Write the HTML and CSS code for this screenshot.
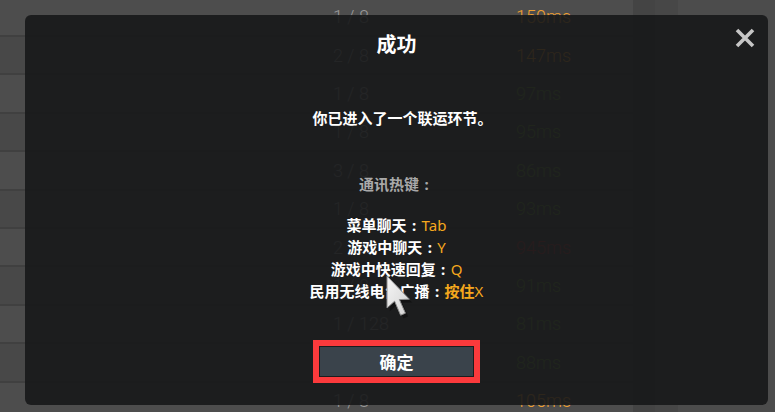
FILE: index.html
```html
<!DOCTYPE html>
<html lang="zh">
<head>
<meta charset="utf-8">
<title>成功</title>
<link rel="stylesheet" href="styles.css">
</head>
<body>
<div class="page">
  <div class="table">
    <div class="row"><span class="frac">1 / 8</span><span class="ms orange">150ms</span></div>
    <div class="row"><span class="frac">2 / 8</span><span class="ms orange">147ms</span></div>
    <div class="row"><span class="frac">1 / 8</span><span class="ms green">97ms</span></div>
    <div class="row"><span class="frac">1 / 8</span><span class="ms green">95ms</span></div>
    <div class="row"><span class="frac">3 / 8</span><span class="ms green">86ms</span></div>
    <div class="row"><span class="frac">1 / 8</span><span class="ms green">93ms</span></div>
    <div class="row"><span class="frac">2 / 8</span><span class="ms red">945ms</span></div>
    <div class="row"><span class="frac">1 / 8</span><span class="ms green">91ms</span></div>
    <div class="row"><span class="frac">1 / 128</span><span class="ms green">81ms</span></div>
    <div class="row"><span class="frac">1 / 8</span><span class="ms green">88ms</span></div>
    <div class="row"><span class="frac">1 / 8</span><span class="ms orange">105ms</span></div>
  </div>
  <div class="strip strip-a"></div>
  <div class="strip strip-b"></div>
  <div class="rest"></div>
</div>

<div class="modal">
  <button class="close" aria-label="关闭">
    <svg width="20" height="20" viewBox="0 0 20 20"><path d="M2 2 L18 18 M18 2 L2 18" stroke="#c6c6c6" stroke-width="3.6" fill="none"/></svg>
  </button>
  <h1 class="title">成功</h1>
  <p class="msg">你已进入了一个联运环节。</p>
  <p class="hk-head">通讯热键<span class="colon">:</span></p>
  <ul class="hk-list">
    <li>菜单聊天<span class="colon">:</span><span class="key lat">Tab</span></li>
    <li>游戏中聊天<span class="colon">:</span><span class="key lat">Y</span></li>
    <li>游戏中快速回复<span class="colon">:</span><span class="key lat">Q</span></li>
    <li>民用无线电台广播<span class="colon">:</span><span class="key">按住<span class="lat">X</span></span></li>
  </ul>
  <div class="btn-wrap"><button class="ok">确定</button></div>
</div>

<svg class="cursor" width="28" height="46" viewBox="0 0 14 23">
  <defs>
    <linearGradient id="cg" x1="0" y1="0" x2="1" y2="1">
      <stop offset="0" stop-color="#f6f6f6"/>
      <stop offset="1" stop-color="#d2d2d2"/>
    </linearGradient>
  </defs>
  <path d="M1.8 1.8 L1.8 17.8 L5.6 14.4 L8.6 21.4 L11 20.4 L8 13.6 L13 13.4 Z" fill="#000" opacity="0.35" transform="translate(0.6 0.8)"/>
  <path d="M1 1 L1 17 L4.8 13.6 L7.8 20.6 L10.2 19.6 L7.2 12.8 L12.2 12.6 Z" fill="url(#cg)" stroke="#8c8c8c" stroke-width="0.5" stroke-linejoin="round"/>
</svg>
</body>
</html>
```

FILE: styles.css
```css
html, body {
  margin: 0;
  padding: 0;
  width: 775px;
  height: 412px;
  overflow: hidden;
  background: #4b4b4b;
}

.page {
  display: flex;
  height: 412px;
  overflow: hidden;
}

.table {
  width: 633px;
  margin-top: -1.4px;
  flex: none;
}

.row {
  box-sizing: border-box;
  height: 38.4px;
  border-bottom: 2px solid #404040;
  display: flex;
  align-items: center;
  padding-left: 333px;
  font-family: Roboto, "Liberation Sans", sans-serif;
  font-weight: 300;
  font-size: 18px;
  color: #9a9a9a;
  background: #4d4d4d;
}
.row:nth-child(even) { background: #484848; }

.frac { width: 183px; }
.orange { color: #f0a030; }
.green { color: #6f9a3a; }
.red { color: #b23a3a; }

.strip { flex: none; height: 100%; }
.strip-a { width: 22px; background: #444444; }
.strip-b { width: 23px; background: #474747; }
.rest { flex: 1; background: #4c4c4c; }

.modal {
  position: absolute;
  left: 25px;
  top: 15px;
  width: 743px;
  height: 390px;
  border-radius: 6px;
  background: rgba(23, 24, 25, 0.9);
  display: flex;
  flex-direction: column;
  align-items: center;
  font-family: "Noto Sans CJK SC", "Noto Sans", sans-serif;
  font-weight: 700;
  color: #ffffff;
  text-align: center;
}

.close {
  position: absolute;
  right: 13px;
  top: 13px;
  width: 20px;
  height: 20px;
  padding: 0;
  border: 0;
  background: none;
  display: flex;
}

.title {
  margin: 15px 0 0;
  font-size: 20px;
  line-height: 28px;
  font-weight: 700;
}

.msg {
  margin: 49px 0 0;
  padding-left: 12px;
  font-size: 15px;
  line-height: 21px;
}

.hk-head {
  margin: 45px 0 0;
  font-size: 15px;
  line-height: 21px;
  color: #a9a9a9;
}

.colon {
  display: inline-block;
  width: 15px;
  text-align: center;
  font-family: "Noto Sans", "Liberation Sans", sans-serif;
  font-weight: 700;
}

.hk-list {
  list-style: none;
  margin: 19px 0 0;
  padding: 0;
  font-size: 15px;
  line-height: 21px;
}

.key { color: #f5a81d; }
.lat {
  font-family: "Noto Sans", "Liberation Sans", sans-serif;
  font-weight: 400;
}

.btn-wrap {
  margin-top: 45px;
  outline: 6px solid #fb3a3c;
  outline-offset: 1px;
  display: flex;
}

.ok {
  width: 153px;
  height: 29px;
  padding: 0;
  border: 0;
  background: #3a434b;
  color: #ffffff;
  font-family: "Noto Sans CJK SC", sans-serif;
  font-weight: 700;
  font-size: 17px;
  line-height: 29px;
}

.cursor {
  position: absolute;
  left: 385px;
  top: 274px;
}
```
